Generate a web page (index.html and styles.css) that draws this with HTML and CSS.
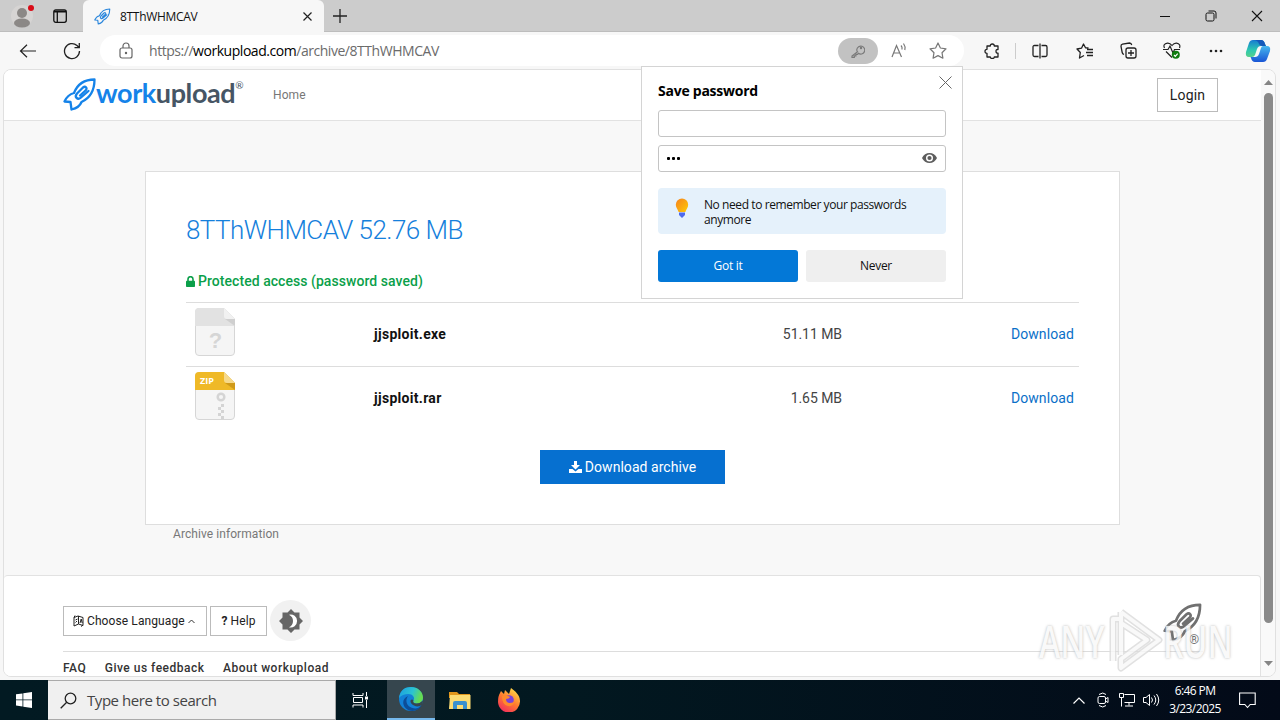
FILE: index.html
```html
<!DOCTYPE html>
<html lang="en">
<head>
    <meta charset="UTF-8">
    <meta name="viewport" content="width=device-width, initial-scale=1.0">
    <title>8TThWHMCAV</title>
    <link rel="stylesheet" href="styles.css">
</head>
<body>
    <svg class="defs" width="0" height="0">
        <symbol id="rocket" viewBox="0 0 34 33">
            <g fill="none" stroke="currentColor" stroke-width="2.3" stroke-linejoin="round" stroke-linecap="round">
                <path d="M31.500 1.500C21 1.500 14.500 6 11 15C7 16 3.500 19 1.500 23.500L7.500 24L8.500 31.500C13 30.500 17 28 18.500 24C27 20 31.500 12 31.500 1.500z"/>
                <path d="M17 17.500L22.500 12.500C25 10.500 22.500 7.500 20 9.500L14 15.500C11 19 14.500 22.500 18 19.500L25.500 13"/>
            </g>
        </symbol>
    </svg>

    <!-- Tab strip -->
    <div class="tabstrip">
        <div class="profile">
            <svg width="24" height="24" viewBox="0 0 24 24"><circle cx="11" cy="12" r="11" fill="#d6d4d3"/><circle cx="11" cy="9" r="5" fill="#8b8886"/><ellipse cx="11" cy="19" rx="8" ry="4.500" fill="#8b8886"/><circle cx="20" cy="4" r="3" fill="#d90b17"/></svg>
        </div>
        <svg class="workspace" width="16" height="16" viewBox="0 0 16 16" fill="none" stroke="#111" stroke-width="1.300"><rect x="1.800" y="1.800" width="12.500" height="12.500" rx="2"/><path d="M2 3.500h12" stroke-width="2"/><path d="M5.300 3v11"/></svg>
        <div class="tab">
            <svg class="tab-logo" width="17" height="17"><use href="#rocket"/></svg>
            <span>8TThWHMCAV</span>
            <svg class="tab-close" width="9" height="9" viewBox="0 0 9 9" stroke="#222" stroke-width="1.200"><path d="M.5.5l8 8M8.500.5l-8 8"/></svg>
        </div>
        <svg class="newtab" width="14" height="14" viewBox="0 0 14 14" stroke="#222" stroke-width="1.300"><path d="M7 0v14M0 7h14"/></svg>
        <div class="wincontrols">
            <svg width="12" height="12" viewBox="0 0 12 12" stroke="#111"><path d="M1 6.500h10"/></svg>
            <svg width="12" height="12" viewBox="0 0 12 12" fill="none" stroke="#111"><rect x="1" y="3" width="8" height="8" rx="1.500"/><path d="M3.500 1H9q2 0 2 2v5.500"/></svg>
            <svg width="12" height="12" viewBox="0 0 12 12" stroke="#111" stroke-width="1.100"><path d="M1 1l10 10M11 1L1 11"/></svg>
        </div>
    </div>

    <!-- Address bar -->
    <div class="toolbar">
        <svg class="back" width="18" height="14" viewBox="0 0 18 14" fill="none" stroke="#222" stroke-width="1.200"><path d="M8 .8L1.500 7L8 13.200M1.500 7H17"/></svg>
        <svg class="reload" width="18" height="18" viewBox="0 0 18 18" fill="none" stroke="#222" stroke-width="1.300"><path d="M16.500 9A7.500 7.500 0 1 1 14 3.500L16 5.500M16.300 1v4.700h-4.800"/></svg>
        <div class="omnibox">
            <svg class="lock" width="14" height="17" viewBox="0 0 14 17" fill="none" stroke="#666" stroke-width="1.200"><rect x="1" y="6" width="12" height="10" rx="2"/><path d="M4 6V4a3 3 0 0 1 6 0v2"/><circle cx="7" cy="11" r=".6" fill="#666"/></svg>
            <div class="url">https://<b>workupload.com</b>/archive/8TThWHMCAV</div>
            <div class="key">
                <svg width="14" height="14" viewBox="0 0 14 14" fill="none" stroke="#7a7a7a" stroke-width="1.200"><path d="M6.500 7.800L1 12v1.400h2.300v-1.500h1.600v-1.500h1.600l.9-1.100A4 4 0 1 0 5.800 5.500q-.1 1.500.7 2.300z"/><circle cx="10" cy="4" r=".6"/></svg>
            </div>
            <svg class="read" width="17" height="16" viewBox="0 0 17 16" fill="none" stroke="#777" stroke-width="1.200"><path d="M1 14L5.500 2.500l5 11.500M2.700 10h6.600M10 2.500q1.500 1.500 1 4M12.500 .5q2.200 3 1.300 6.500"/></svg>
            <svg class="star" width="18" height="17" viewBox="0 0 18 17" fill="none" stroke="#777" stroke-width="1.200" stroke-linejoin="round"><path d="M9 1l2.400 5 5.600.8-4 3.900.9 5.500L9 13.600l-4.900 2.600.9-5.500-4-3.900 5.600-.8z"/></svg>
        </div>
        <svg class="ext" width="16" height="16" viewBox="0 0 16 16" fill="none" stroke="#222" stroke-width="1.300" stroke-linejoin="round"><path d="M3 3h3.300q0-2 2-2t2 2H14v3.500q-2-.2-2 1.800t2 1.800V14h-3.700q0 1.500-2 1.500t-2-1.500H3v-3.700q-2 0-2-2t2-2z"/></svg>
        <i class="sep"></i>
        <svg class="split" width="16" height="16" viewBox="0 0 16 16" fill="none" stroke="#222" stroke-width="1.300"><path d="M6.500 2.500h-4q-1.500 0-1.500 1.500v8q0 1.500 1.500 1.500h4M9.500 2.500h4q1.500 0 1.500 1.500v8q0 1.500-1.500 1.500h-4M8 .5v15"/></svg>
        <svg class="favs" width="17" height="16" viewBox="0 0 17 16" fill="none" stroke="#222" stroke-width="1.300" stroke-linejoin="round"><path d="M12.500 5L9.500 4.800 7.500 1 5.500 5.200 1 6l3.300 3.500L3.500 15 8 12.500M11 6.500h6M10 9.500h7M11 12.500h6"/></svg>
        <svg class="collections" width="17" height="17" viewBox="0 0 17 17" fill="none" stroke="#222" stroke-width="1.300"><rect x="6" y="6" width="10" height="10" rx="2"/><path d="M11 8v6M8 11h6M4 12.500q-1.500-.5-1.800-2L1 4.500Q.8 2.500 2.500 2.200L9.500 1q1.800 0 2.200 2"/></svg>
        <svg class="health" width="18" height="17" viewBox="0 0 18 17" fill="none" stroke="#222" stroke-width="1.200"><path d="M1.500 6Q-.5 2 4.500 1.200 7 1 9 3.500 11 1 13.500 1.200 18 2 16.500 6M0 7.500h5l2-3.500 3 7 1.500-3.500H17M3 9.500l6 6"/><circle cx="12.800" cy="12.800" r="4" fill="#107c10" stroke="none"/><path d="M11 13l1.300 1.300 2.400-2.600" stroke="#fff"/></svg>
        <svg class="more" width="14" height="4" viewBox="0 0 14 4" fill="#222"><circle cx="2" cy="2" r="1.300"/><circle cx="7" cy="2" r="1.300"/><circle cx="12" cy="2" r="1.300"/></svg>
        <svg class="copilot" width="26" height="24" viewBox="0 0 26 24">
            <defs>
                <linearGradient id="cpA" x1="0" y1="0" x2="0" y2="1"><stop offset="0" stop-color="#167bd2"/><stop offset=".6" stop-color="#2dc9b0"/><stop offset="1" stop-color="#58d08b"/></linearGradient>
                <linearGradient id="cpB" x1="0" y1="0" x2="0" y2="1"><stop offset="0" stop-color="#45b7ee"/><stop offset="1" stop-color="#1955d5"/></linearGradient>
            </defs>
            <path d="M8 1h8q3 0 4 4l1 2h-5q-3 0-4 3l-2 6q-1 2-3 2H4q-4 0-3-5l3-9Q5 1 8 1z" fill="url(#cpA)"/>
            <path d="M18 7h4q4 0 3 5l-3 8q-1 3-4 3h-8q-3 0-4-4l-.5-1H10q3 0 4-3l2-6q.5-2 2-2z" fill="url(#cpB)"/>
            <path d="M8 1h8q3 0 4 4l1 2h-4q-2 0-3-2-1-4-6-4z" fill="#1459ba"/>
        </svg>
    </div>

    <!-- Page -->
    <div class="viewport">
        <div class="page">
            <header class="header">
                <div class="brand">
                    <svg class="brand-rocket" width="34" height="33"><use href="#rocket"/></svg>
                    <span class="brand-work">work</span><span class="brand-upload">upload</span><sup>®</sup>
                </div>
                <a class="home">Home</a>
                <a class="login">Login</a>
            </header>

            <main class="main">
                <div class="card">
                    <h1>8TThWHMCAV 52.76 MB</h1>
                    <div class="protected">
                        <svg width="9" height="11" viewBox="0 0 9 11"><path d="M2 5V3.200a2.500 2.500 0 0 1 5 0V5" fill="none" stroke="#0b9f4a" stroke-width="1.600"/><rect y="4.800" width="9" height="6.200" rx=".8" fill="#0b9f4a"/></svg>
                        <span>Protected access (password saved)</span>
                    </div>
                    <div class="file">
                        <svg class="file-icon" width="40" height="48" viewBox="0 0 40 48">
                            <path d="M4 .5h25L39.500 11v33q0 3.500-3.500 3.500H4Q.5 47.500.5 44V4Q.5.500 4 .5z" fill="#f5f5f5" stroke="#d6d6d6"/>
                            <path d="M4 0h25l11 11v7H0V4q0-4 4-4z" fill="#e2e2e2"/><path d="M30 11h10v7z" fill="#cfcfcf"/><path d="M29 0l11 11h-8q-3 0-3-3z" fill="#f1f1f1"/>
                            <text x="20.500" y="40" text-anchor="middle" class="unknown">?</text>
                        </svg>
                        <span class="name exe">jjsploit.exe</span>
                        <span class="size">51.11 MB</span>
                        <a class="download">Download</a>
                    </div>
                    <div class="file">
                        <svg class="file-icon" width="40" height="48" viewBox="0 0 40 48">
                            <path d="M4 .5h25L39.500 11v33q0 3.500-3.500 3.500H4Q.5 47.500.5 44V4Q.5.500 4 .5z" fill="#f5f5f5" stroke="#d6d6d6"/>
                            <path d="M4 0h25l11 11v7H0V4q0-4 4-4z" fill="#efb927"/><path d="M30 11h10v7z" fill="#d09a18"/><path d="M29 0l11 11h-8q-3 0-3-3z" fill="#f6d98a"/>
                            <text x="5" y="12" class="zip">ZIP</text>
                            <circle cx="26" cy="25" r="3.300" fill="none" stroke="#d4d4d4" stroke-width="2.500"/>
                            <path d="M26 32h3v3h-3zM23 35h3v3h-3zM26 38h3v3h-3zM23 41h3v3h-3zM26 44h3v3h-3z" fill="#d4d4d4"/>
                        </svg>
                        <span class="name rar">jjsploit.rar</span>
                        <span class="size">1.65 MB</span>
                        <a class="download">Download</a>
                    </div>
                    <a class="archive">
                        <svg width="13" height="12" viewBox="0 0 13 12" fill="#fff"><path d="M5 0h3v4h3L6.500 8.500 2 4h3z"/><path d="M0 8h3.500l3 2.500L9.500 8H13v4H0z"/></svg>
                        <span>Download archive</span>
                    </a>
                </div>
                <div class="info">Archive information</div>
            </main>

            <footer class="footer">
                <div class="footer-top">
                    <a class="btn lang">
                        <svg width="11" height="12" viewBox="0 0 11 12" fill="none" stroke="#222"><path d="M1 2.500L5 1l5 1.500v8L5.500 9 1 11zM5.500 1v8M2.500 5l2-1M2.500 7.500l1.500-1.500M7 8l1.200-4L9.200 8M1 2.500l1-2M10 10l-2 1.500"/></svg>
                        <span>Choose Language</span>
                        <svg class="caret" width="7" height="5" viewBox="0 0 7 5" fill="none" stroke="#333"><path d="M.5 4l3-3 3 3"/></svg>
                    </a>
                    <a class="btn help"><b>?</b> Help</a>
                    <div class="theme">
                        <svg width="24" height="24" viewBox="0 0 24 24"><path d="M12 0l3.500 3.500h5v5L24 12l-3.500 3.500v5h-5L12 24l-3.500-3.500h-5v-5L0 12l3.500-3.500v-5h5z" fill="#666"/><path d="M10 5.700a6.500 6.500 0 1 1 0 12.600q4-2 4-6.300t-4-6.300z" fill="#fff"/></svg>
                    </div>
                    <div class="footer-logo">
                        <svg width="40" height="39"><use href="#rocket"/></svg>
                        <span>®</span>
                    </div>
                </div>
                <div class="links"><a class="faq">FAQ</a><a class="feedback">Give us feedback</a><a class="about">About workupload</a></div>
            </footer>
        </div>
        <div class="scrollbar">
            <svg width="9" height="5" viewBox="0 0 9 5" fill="#858585"><path d="M0 5l4.500-5L9 5z"/></svg>
            <i class="thumb"></i>
            <svg width="9" height="5" viewBox="0 0 9 5" fill="#858585"><path d="M0 0l4.500 5L9 0z"/></svg>
        </div>
    </div>

    <!-- Save password bubble -->
    <div class="popup">
        <svg class="popup-close" width="13" height="13" viewBox="0 0 13 13" stroke="#666"><path d="M.5.500l12 12M12.500.500l-12 12"/></svg>
        <h2>Save password</h2>
        <div class="field"></div>
        <div class="field">
            <span class="dots"><i></i><i></i><i></i></span>
            <svg width="15" height="10" viewBox="0 0 15 10"><path d="M0 5Q2.500 0 7.500 0T15 5q-2.500 5-7.500 5T0 5z" fill="#5d5d5d"/><circle cx="7.500" cy="5" r="3.500" fill="#fff"/><circle cx="7.500" cy="5" r="2.100" fill="#5d5d5d"/></svg>
        </div>
        <div class="tip">
            <svg width="14" height="20" viewBox="0 0 14 20">
                <defs><linearGradient id="bulb" x1="0" y1="0" x2="1" y2="1"><stop offset="0" stop-color="#f58220"/><stop offset="1" stop-color="#ffcb05"/></linearGradient></defs>
                <path d="M7 .5a6.200 6.200 0 0 1 6.200 6.200c0 3-2.200 4.500-2.800 7.300H3.600C3 11.200.8 9.700.8 6.700A6.200 6.200 0 0 1 7 .5z" fill="url(#bulb)"/><path d="M4 14.500h6v2.500l-3 3-3-3z" fill="#4f6bed"/>
            </svg>
            <p>No need to remember your passwords anymore</p>
        </div>
        <div class="popup-buttons"><div class="got">Got it</div><div class="never">Never</div></div>
    </div>

    <!-- Watermark -->
    <div class="watermark">
        <span>ANY</span>
        <svg width="54" height="64" viewBox="0 0 54 64" fill="none" stroke-linejoin="round"><path d="M4 53V11h7M12 4v43M12 4l38 28-38 28v-9l26-19-26-17" stroke="#dcdcdc" stroke-width="7"/><path d="M4 53V11h7M12 4v43M12 4l38 28-38 28v-9l26-19-26-17" stroke="#f8f8f8" stroke-width="4"/></svg>
        <span class="run">RUN</span>
    </div>

    <!-- Taskbar -->
    <div class="taskbar">
        <div class="start"><svg width="16" height="16" viewBox="0 0 16 16" fill="#fff"><path d="M0 2.300L6.500 1.400v6.100H0zM7.300 1.300L16 0v7.500H7.300zM0 8.300h6.500v6.200L0 13.600zM7.300 8.300H16V16l-8.700-1.300z"/></svg></div>
        <div class="search">
            <svg width="17" height="17" viewBox="0 0 17 17" fill="none" stroke="#222" stroke-width="1.300"><circle cx="10.500" cy="6.500" r="5.300"/><path d="M6.700 10.300L.7 16.300"/></svg>
            <span>Type here to search</span>
        </div>
        <div class="app"><svg width="17" height="16" viewBox="0 0 17 16" fill="none" stroke="#fff"><path d="M1 1v2.500h10V1M1 15.500V13h10v2.500M1.500 5.500h9v5h-9zM14.500 0v4M14.500 8v8"/><path d="M13 4.500h3v3h-3z" fill="#fff" stroke="none"/></svg></div>
        <div class="app active">
            <svg width="26" height="26" viewBox="0 0 26 26">
                <defs><linearGradient id="edA" x1="0" y1="0" x2="1" y2=".3"><stop offset="0" stop-color="#1b9de2"/><stop offset=".6" stop-color="#2bc3d2"/><stop offset="1" stop-color="#66dc51"/></linearGradient></defs>
                <circle cx="13" cy="13" r="12" fill="#1280d6"/>
                <path d="M1 12C2 4 7 1 13 1c7 0 12 5 12 10.500 0 4-3 6-6.500 6-3 0-4-1.500-3-3 2-3-1-6.500-5-6.500-4 0-7.500 1.500-9.500 4z" fill="url(#edA)"/>
                <path d="M10 10c-4 6 0 12.500 7.500 12.500q3 0 6-3.500c-3 7-12 7.500-16 3S5 12 10 10z" fill="#0c4d98"/>
                <path d="M15.500 14.500c-1 1.500 0 3 3 3q3.500 0 6.500-3l-1 4.500q-4 2.500-8 .5t-3.500-5q1.500-2 3 0z" fill="#36464e"/>
            </svg>
        </div>
        <div class="app">
            <svg width="22" height="19" viewBox="0 0 22 19"><path d="M0 1h8l2 2h11v4H0z" fill="#e2971c"/><path d="M1 4h20.500v14H0z" fill="#fddc73"/><path d="M4 18v-6q0-2 2-2h10q2 0 2 2v6h-4v-4H8v4z" fill="#3b91cf"/></svg>
        </div>
        <div class="app">
            <svg width="24" height="24" viewBox="0 0 24 24">
                <defs><linearGradient id="ffA" x1=".8" y1="0" x2=".2" y2="1"><stop offset="0" stop-color="#ffe14a"/><stop offset=".5" stop-color="#ff7b2e"/><stop offset="1" stop-color="#f2295f"/></linearGradient></defs>
                <path d="M3 5l1-2 3 3 1-4 4 4 2-6c4 3 9 7 9 13a11 11 0 0 1-22 1q0-6 2-9z" fill="url(#ffA)"/><circle cx="12" cy="12" r="4.800" fill="#7b42d8"/><path d="M5 8q4-2 8 1-1 2-4 2 0 4 4 4 3 0 5-2-2 6-7 5-6-1-6-10z" fill="#ff8a2b"/>
            </svg>
        </div>
        <div class="tray">
            <svg width="12" height="7" viewBox="0 0 12 7" fill="none" stroke="#fff" stroke-width="1.200"><path d="M.5 6.500L6 1l5.500 5.500"/></svg>
            <svg class="meet" width="12" height="16" viewBox="0 0 12 16" fill="none" stroke="#fff"><rect x="1" y="4.500" width="7.500" height="7" rx="1.500"/><path d="M8.500 7l2.500-1.500v5L8.500 9M2 2.500q4-3 7 0M2 13.500q4 3 7 0"/></svg>
            <svg width="16" height="14" viewBox="0 0 16 14" fill="none" stroke="#fff"><path d="M5.500 1.500h10v8h-10M.5.500h4v4h-4zM2.500 4.500v9M10 9.500v3M6 13h8"/></svg>
            <svg class="volume" width="17" height="14" viewBox="0 0 17 14" fill="none" stroke="#fff"><path d="M.5 4.500h2.500l3.500-3v11L3 9.500H.5zM8.500 4.500q2 2.500 0 5M11 2.500q3.500 4.500 0 9M13.500 1q4.500 6 0 12"/></svg>
            <div class="clock"><span>6:46 PM</span><span class="date">3/23/2025</span></div>
            <svg class="notify" width="17" height="17" viewBox="0 0 17 17" fill="none" stroke="#fff" stroke-width="1.100"><path d="M.6 1h15.600v11.500h-5l-2.700 3-2.700-3H.6z"/></svg>
        </div>
    </div>
</body>
</html>
```

FILE: styles.css
```css
* {
    box-sizing: border-box;
}
body {
    margin: 0;
    width: 1280px;
    height: 720px;
    overflow: hidden;
    display: flex;
    flex-direction: column;
    position: relative;
    background: #f7f7f7;
    font-family: Roboto, "Liberation Sans", sans-serif;
    color: #222;
}
svg {
    display: block;
    flex: none;
}
.defs {
    position: absolute;
}

/* Tab strip */
.tabstrip {
    flex: none;
    height: 32px;
    background: #ccc;
    border-bottom: 1px solid #bdbdbd;
    display: flex;
    align-items: center;
    font-family: "Open Sans", sans-serif;
}
.profile {
    margin-left: 11px;
}
.workspace {
    margin-left: 17px;
}
.tab {
    width: 241px;
    height: 32px;
    margin: 0 0 -1px 15px;
    padding: 0 12px 0 11px;
    display: flex;
    align-items: center;
    background: #f7f7f7;
    border-radius: 6px 6px 0 0;
    font-size: 12px;
    letter-spacing: -0.3px;
    color: #111;
}
.tab-logo {
    color: #2a86dc;
    margin-right: 9px;
}
.tab-close {
    margin-left: auto;
}
.newtab {
    margin-left: 9px;
}
.wincontrols {
    margin-left: auto;
    margin-right: 17px;
    display: flex;
    gap: 34px;
}

/* Address bar */
.toolbar {
    flex: none;
    height: 37px;
    display: flex;
    align-items: center;
    background: #f7f7f7;
}
.back {
    margin-left: 19px;
}
.reload {
    margin-left: 26px;
}
.omnibox {
    width: 864px;
    height: 31px;
    margin-left: 19px;
    padding: 0 17px 0 19px;
    display: flex;
    align-items: center;
    background: #fff;
    border-radius: 16px;
}
.url {
    margin-left: 16px;
    font-family: "Open Sans", sans-serif;
    font-size: 14px;
    letter-spacing: -0.46px;
    color: #6b6b6b;
    white-space: nowrap;
}
.url b {
    font-weight: normal;
    color: #000;
}
.key {
    width: 40px;
    height: 26px;
    margin-left: auto;
    border-radius: 13px;
    background: #c2c2c2;
    display: flex;
    align-items: center;
    justify-content: center;
}
.read {
    margin-left: 13px;
}
.star {
    margin-left: 21px;
}
.ext {
    margin-left: 20px;
}
.sep {
    width: 1px;
    height: 16px;
    margin-left: 15px;
    background: #ccc;
}
.split {
    margin-left: 16px;
}
.favs {
    margin-left: 28px;
}
.collections {
    margin-left: 27px;
}
.health {
    margin-left: 26px;
}
.more {
    margin-left: 28px;
}
.copilot {
    margin-left: 22px;
}

/* Page frame */
.viewport {
    flex: none;
    width: 1273px;
    height: 608px;
    margin: 0 0 3px 3px;
    border: 1px solid #e0e0e0;
    border-radius: 8px;
    overflow: hidden;
    display: flex;
    background: #f9f9f9;
}
.page {
    width: 1257px;
    display: flex;
    flex-direction: column;
    background: #f8f8f8;
}
.header {
    flex: none;
    height: 51px;
    padding: 0 43px 0 59px;
    display: flex;
    align-items: center;
    background: #fff;
    border-bottom: 1px solid #e2e2e2;
}
.brand {
    width: 181px;
    margin-top: -2px;
    display: flex;
    align-items: center;
    font-family: Lato, sans-serif;
    font-size: 27px;
    line-height: 30px;
    letter-spacing: -0.4px;
}
.brand-rocket {
    color: #1583e9;
    margin-right: -1px;
}
.brand-work {
    margin-top: -3px;
    color: #1583e9;
    font-weight: bold;
}
.brand-upload {
    margin-top: -3px;
    color: #465564;
    font-weight: bold;
}
.brand sup {
    align-self: flex-start;
    font-size: 10px;
    line-height: 15px;
    color: #465564;
}
.home {
    margin: -1px 0 0 29px;
    font-size: 12px;
    letter-spacing: 0.1px;
    color: #777;
}
.login {
    width: 61px;
    height: 34px;
    margin-left: auto;
    border: 1px solid #bbb;
    font-size: 14px;
    line-height: 33px;
    letter-spacing: 0.2px;
    text-align: center;
}
.main {
    flex: none;
    height: 454px;
    padding: 50px 0 0 141px;
}
.card {
    width: 975px;
    height: 354px;
    padding: 43px 40px 0;
    background: #fff;
    border: 1px solid #dedede;
}
.card h1 {
    margin: 0;
    font-size: 26px;
    line-height: 30px;
    font-weight: 300;
    letter-spacing: -0.55px;
    color: #1580dc;
    white-space: nowrap;
}
.protected {
    height: 16px;
    margin: 28px 0 13px;
    display: flex;
    align-items: center;
    gap: 3px;
    color: #0b9f4a;
    font-size: 14px;
    font-weight: 500;
    letter-spacing: 0.05px;
}
.file {
    height: 64px;
    padding-bottom: 2px;
    display: grid;
    grid-template-columns: 188px 367px 101px 237px;
    align-items: center;
    border-top: 1px solid #ddd;
    font-size: 14px;
}
.file-icon {
    margin: -4px 0 0 9px;
}
.unknown {
    font: bold 22px "Liberation Sans", sans-serif;
    fill: #d6d6d6;
}
.zip {
    font: bold 9px "Open Sans", sans-serif;
    fill: #fff;
}
.name {
    font-weight: bold;
    letter-spacing: 0.3px;
    color: #111;
}
.size {
    text-align: right;
    letter-spacing: -0.05px;
    color: #444;
}
.download {
    padding-right: 5px;
    text-align: right;
    letter-spacing: 0.1px;
    color: #0a6fc8;
}
.archive {
    width: 185px;
    height: 34px;
    margin: 20px 0 0 354px;
    display: flex;
    align-items: center;
    justify-content: center;
    gap: 3px;
    background: #0670d0;
    color: #fff;
    font-size: 14px;
    letter-spacing: 0.05px;
}
.info {
    margin-left: 28px;
    font-size: 12px;
    line-height: 18px;
    letter-spacing: 0.07px;
    color: #777;
}
.footer {
    flex: 1;
    padding: 25px 0 0 59px;
    background: #fff;
    border: 1px solid #e2e2e2;
    border-width: 1px 1px 0 0;
    border-radius: 4px 4px 0 0;
}
.footer-top {
    height: 51px;
    display: flex;
    align-items: flex-start;
    border-bottom: 1px solid #ddd;
    margin-right: 57px;
}
.btn {
    height: 30px;
    margin-top: 5px;
    border: 1px solid #bbb;
    display: flex;
    align-items: center;
    font-size: 12px;
    letter-spacing: 0.1px;
}
.lang {
    width: 144px;
    padding-left: 9px;
    gap: 3px;
}
.help {
    width: 57px;
    margin-left: 3px;
    justify-content: center;
    gap: 3px;
}
.theme {
    width: 41px;
    height: 41px;
    margin: -1px 0 0 3px;
    border-radius: 50%;
    background: #f1f1f1;
    display: flex;
    align-items: center;
    justify-content: center;
}
.footer-logo {
    position: relative;
    margin: 2px 0 0 auto;
    color: #707070;
}
.footer-logo span {
    position: absolute;
    left: 26px;
    top: 29px;
    font-size: 13px;
    line-height: 16px;
}
.links {
    display: flex;
    padding-top: 8px;
    font-size: 12px;
    line-height: 16px;
    font-weight: 500;
    gap: 18.5px;
    letter-spacing: 0.5px;
    color: #333;
}
.scrollbar {
    width: 14px;
    padding: 10px 0 10px;
    display: flex;
    flex-direction: column;
    align-items: center;
    background: #f9f9f9;
}
.thumb {
    width: 9px;
    height: 530px;
    margin: 8px 0 auto;
    border-radius: 5px;
    background: #8a8a8a;
}

/* Save password bubble */
.popup {
    position: absolute;
    left: 641px;
    top: 66px;
    width: 322px;
    height: 233px;
    padding: 15px 16px;
    background: #fff;
    border: 1px solid #d4d4d4;
    font-family: "Open Sans", sans-serif;
    font-size: 12px;
    color: #111;
}
.popup-close {
    position: absolute;
    right: 10px;
    top: 9px;
}
.popup h2 {
    margin: 0 0 10px;
    font-size: 14px;
    line-height: 18px;
    letter-spacing: -0.25px;
    color: #000;
}
.field {
    height: 27px;
    margin-bottom: 8px;
    padding: 0 8px 1px;
    border: 1px solid #c4c4c4;
    border-radius: 3px;
    display: flex;
    align-items: center;
    justify-content: space-between;
}
.dots {
    display: flex;
    gap: 2px;
}
.dots i {
    width: 3px;
    height: 3px;
    border-radius: 1px;
    background: #000;
}
.tip {
    height: 46px;
    margin-top: 16px;
    padding: 9px 17px 0;
    display: flex;
    gap: 15px;
    background: #e5f1fb;
    border-radius: 4px;
}
.tip svg {
    margin-top: 1px;
}
.tip p {
    margin: 0;
    width: 215px;
    font-size: 12px;
    line-height: 15px;
    letter-spacing: -0.42px;
}
.popup-buttons {
    display: grid;
    grid-template-columns: 1fr 1fr;
    gap: 8px;
    margin-top: 16px;
    line-height: 32px;
    text-align: center;
    letter-spacing: -0.3px;
}
.got {
    border-radius: 3px;
    background: #0378d7;
    color: #fff;
}
.never {
    border-radius: 3px;
    background: #efefef;
}

/* Watermark */
.watermark {
    position: absolute;
    left: 1039px;
    top: 608px;
    display: flex;
    align-items: center;
    opacity: 0.85;
    font-family: "Open Sans", sans-serif;
    font-size: 46px;
    font-weight: 600;
    color: #f8f8f8;
    text-shadow: 0 0 3px #aaa;
}
.watermark span {
    width: 70px;
    transform: scaleX(0.7);
    transform-origin: 0 50%;
}

/* Taskbar */
.taskbar {
    flex: none;
    height: 40px;
    display: flex;
    background: linear-gradient(90deg, #021a22, #021820 45%, #030a18);
    font-family: "Open Sans", sans-serif;
}
.start {
    width: 48px;
    display: flex;
    align-items: center;
    justify-content: center;
}
.search {
    width: 288px;
    padding-left: 12px;
    display: flex;
    align-items: center;
    gap: 10px;
    background: #f0f0f0;
    border: 1px solid #aaa;
    border-left: 0;
    font-size: 15px;
    letter-spacing: -0.45px;
    color: #444;
}
.app {
    width: 49px;
    display: flex;
    align-items: center;
    justify-content: center;
}
.app.active {
    width: 48px;
    margin-left: 2px;
    background: #36464e;
    border-bottom: 2px solid #76b9ed;
}
.tray {
    margin-left: auto;
    display: flex;
    align-items: center;
    gap: 10px;
    padding-right: 24px;
    color: #fff;
    font-size: 12px;
}
.meet {
    margin-left: 2px;
}
.volume {
    margin-left: -2px;
}
.clock {
    width: 54px;
    margin-left: -2px;
    display: flex;
    flex-direction: column;
    align-items: center;
    line-height: 18px;
    letter-spacing: -0.6px;
    white-space: nowrap;
}
.notify {
    margin-left: 7px;
}
```
